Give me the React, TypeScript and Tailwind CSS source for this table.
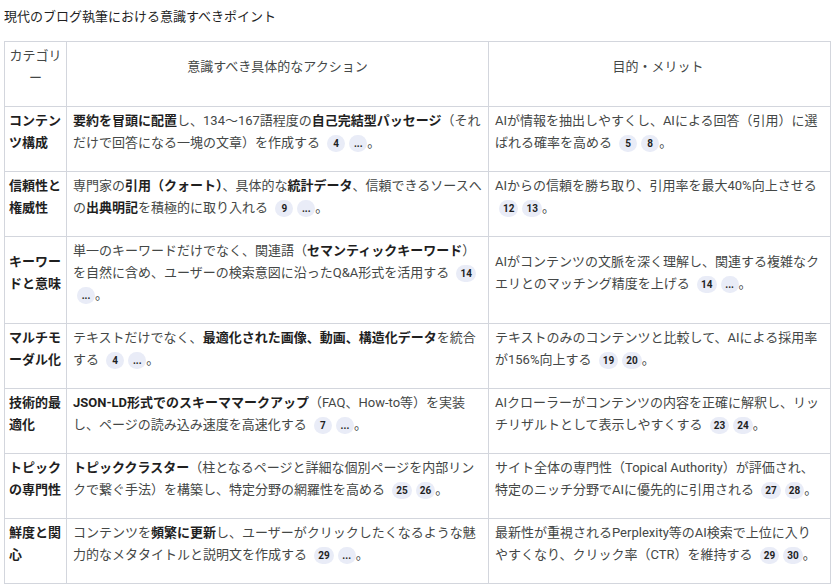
import React from 'react';

const Chip: React.FC<{ n: string }> = ({ n }) => (
  <span className="inline-flex items-center justify-center align-middle h-[17px] min-w-[18px] px-[4px] ml-[4px] rounded-full bg-[#e9ecf7] text-[10px] leading-none font-bold text-[#1f1f1f]">
    {n}
  </span>
);

const B: React.FC<{ children: React.ReactNode }> = ({ children }) => (
  <strong className="font-bold text-[#1f1f1f]">{children}</strong>
);

interface Row {
  category: string;
  action: React.ReactNode;
  merit: React.ReactNode;
}

const rows: Row[] = [
  {
    category: 'コンテンツ構成',
    action: (
      <>
        <B>要約を冒頭に配置</B>し、134〜167語程度の<B>自己完結型パッセージ</B>（それだけで回答になる一塊の文章）を作成する <Chip n="4" /><Chip n="..." />。
      </>
    ),
    merit: (
      <>
        AIが情報を抽出しやすくし、AIによる回答（引用）に選ばれる確率を高める <Chip n="5" /><Chip n="8" />。
      </>
    ),
  },
  {
    category: '信頼性と権威性',
    action: (
      <>
        専門家の<B>引用（クォート）</B>、具体的な<B>統計データ</B>、信頼できるソースへの<B>出典明記</B>を積極的に取り入れる <Chip n="9" /><Chip n="..." />。
      </>
    ),
    merit: (
      <>
        AIからの信頼を勝ち取り、引用率を最大40%向上させる <Chip n="12" /><Chip n="13" />。
      </>
    ),
  },
  {
    category: 'キーワードと意味',
    action: (
      <>
        単一のキーワードだけでなく、関連語（<B>セマンティックキーワード</B>）を自然に含め、ユーザーの検索意図に沿ったQ&amp;A形式を活用する <Chip n="14" /><Chip n="..." />。
      </>
    ),
    merit: (
      <>
        AIがコンテンツの文脈を深く理解し、関連する複雑なクエリとのマッチング精度を上げる <Chip n="14" /><Chip n="..." />。
      </>
    ),
  },
  {
    category: 'マルチモーダル化',
    action: (
      <>
        テキストだけでなく、<B>最適化された画像、動画、構造化データ</B>を統合する <Chip n="4" /><Chip n="..." />。
      </>
    ),
    merit: (
      <>
        テキストのみのコンテンツと比較して、AIによる採用率が156%向上する <Chip n="19" /><Chip n="20" />。
      </>
    ),
  },
  {
    category: '技術的最適化',
    action: (
      <>
        <B>JSON-LD形式でのスキーママークアップ</B>（FAQ、How-to等）を実装し、ページの読み込み速度を高速化する <Chip n="7" /><Chip n="..." />。
      </>
    ),
    merit: (
      <>
        AIクローラーがコンテンツの内容を正確に解釈し、リッチリザルトとして表示しやすくする <Chip n="23" /><Chip n="24" />。
      </>
    ),
  },
  {
    category: 'トピックの専門性',
    action: (
      <>
        <B>トピッククラスター</B>（柱となるページと詳細な個別ページを内部リンクで繋ぐ手法）を構築し、特定分野の網羅性を高める <Chip n="25" /><Chip n="26" />。
      </>
    ),
    merit: (
      <>
        サイト全体の専門性（Topical Authority）が評価され、特定のニッチ分野でAIに優先的に引用される <Chip n="27" /><Chip n="28" />。
      </>
    ),
  },
  {
    category: '鮮度と関心',
    action: (
      <>
        コンテンツを<B>頻繁に更新</B>し、ユーザーがクリックしたくなるような魅力的なメタタイトルと説明文を作成する <Chip n="29" /><Chip n="..." />。
      </>
    ),
    merit: (
      <>
        最新性が重視されるPerplexity等のAI検索で上位に入りやすくなり、クリック率（CTR）を維持する <Chip n="29" /><Chip n="30" />。
      </>
    ),
  },
];

export default function App() {
  const cell = 'border border-[#d3d6dd] align-middle pt-[3px] pb-[17px]';
  return (
    <div
      lang="ja"
      className="bg-white px-[4px] pt-[6px] text-[13px] leading-[22px] text-[#444746] font-['Roboto','Noto_Sans_CJK_JP',sans-serif]"
    >
      <div className="text-[#1f1f1f] mb-[13px]">現代のブログ執筆における意識すべきポイント</div>
      <table className="table-fixed border-collapse w-[826px]">
        <colgroup>
          <col className="w-[62px]" />
          <col className="w-[422px]" />
          <col className="w-[342px]" />
        </colgroup>
        <thead>
          <tr>
            <th className={`${cell} px-[4px] font-normal text-center`}>カテゴリー</th>
            <th className={`${cell} px-[6px] font-normal text-center`}>意識すべき具体的なアクション</th>
            <th className={`${cell} pl-[6px] pr-[9px] font-normal text-center`}>目的・メリット</th>
          </tr>
        </thead>
        <tbody>
          {rows.map((row) => (
            <tr key={row.category}>
              <td className={`${cell} px-[4px] font-bold text-[#1f1f1f]`}>{row.category}</td>
              <td className={`${cell} px-[6px]`}>{row.action}</td>
              <td className={`${cell} pl-[6px] pr-[9px]`}>{row.merit}</td>
            </tr>
          ))}
        </tbody>
      </table>
    </div>
  );
}
